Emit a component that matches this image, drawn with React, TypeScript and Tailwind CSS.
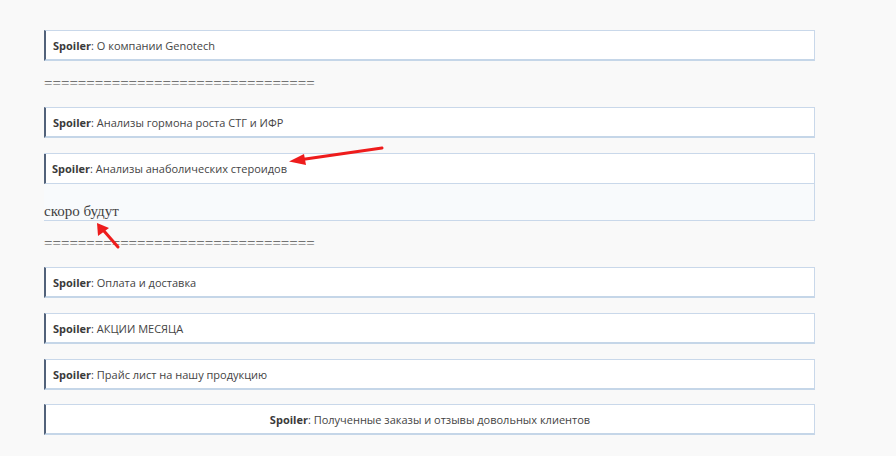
import React from "react";

const EQ = "================================";

function Header({ title, center = false }: { title: string; center?: boolean }) {
  return (
    <div
      className={`h-[31px] bg-white border-t border-r border-t-[#c9d8ea] border-r-[#c9d8ea] border-b-2 border-b-[#c5d6e8] border-l-2 border-l-[#52627a] flex items-center pt-[2px] text-[11px] text-[#444] ${center ? "justify-center pl-0" : "pl-[7px]"}`}
      style={{ fontFamily: '"Open Sans", sans-serif' }}
    >
      <span>
        <b className="font-bold text-[#3a3a3a]">Spoiler</b>: {title}
      </span>
    </div>
  );
}

function Eq() {
  return (
    <div
      className="h-[46px] pt-[14px] text-[15px] leading-[17px] text-[#555]"
      style={{ fontFamily: '"Liberation Serif", serif' }}
    >
      {EQ}
    </div>
  );
}

export default function App() {
  return (
    <div className="relative w-[896px] h-[456px] bg-[#f9f9f9] overflow-hidden">
      <div className="pl-[44px] pt-[30px] w-[815px] flex flex-col">
        <Header title="О компании Genotech" />
        <Eq />
        <Header title="Анализы гормона роста СТГ и ИФР" />
        <div className="mt-[15px] border border-[#c9d8ea]">
          <div
            className="h-[30px] bg-white border-l-2 border-l-[#52627a] border-b border-b-[#c9d8ea] flex items-center pt-[2px] pl-[6px] text-[11px] text-[#444] -ml-px"
            style={{ fontFamily: '"Open Sans", sans-serif' }}
          >
            <span>
              <b className="font-bold text-[#3a3a3a]">Spoiler</b>: Анализы анаболических стероидов
            </span>
          </div>
          <div
            className="h-[36px] bg-[#f8fafc] pt-[19px] -ml-px text-[15px] leading-[17px] text-[#3f3f3f]"
            style={{ fontFamily: '"Liberation Serif", serif' }}
          >
            скоро будут
          </div>
        </div>
        <Eq />
        <Header title="Оплата и доставка" />
        <div className="h-[15px]" />
        <Header title="АКЦИИ МЕСЯЦА" />
        <div className="h-[15px]" />
        <Header title="Прайс лист на нашу продукцию" />
        <div className="h-[14px]" />
        <Header title="Полученные заказы и отзывы довольных клиентов" center />
      </div>
      <svg className="absolute left-0 top-0" width="896" height="456" viewBox="0 0 896 456">
        <line x1="382" y1="148" x2="302" y2="159.5" stroke="#ee1c1c" strokeWidth="3" strokeLinecap="round" />
        <polygon points="289,161.5 304,154 306,165" fill="#ee1c1c" />
        <line x1="118" y1="247" x2="104" y2="231" stroke="#ee1c1c" strokeWidth="3" strokeLinecap="round" />
        <polygon points="97,223 98,236 109,228" fill="#ee1c1c" />
      </svg>
    </div>
  );
}
